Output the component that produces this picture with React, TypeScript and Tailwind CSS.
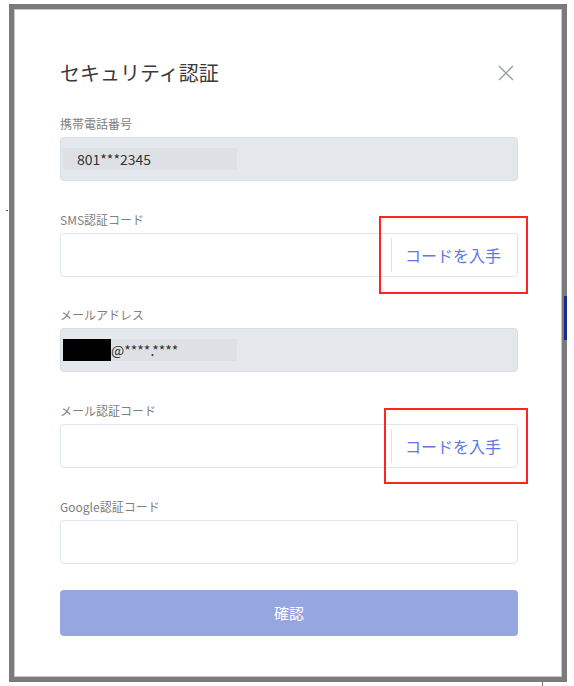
const font = { fontFamily: '"Noto Sans CJK JP", "Noto Sans", sans-serif' };

function Label({ children, className = "" }: { children: React.ReactNode; className?: string }) {
  return <div className={`h-4 text-[12px] leading-4 text-[#808080] ${className}`}>{children}</div>;
}

function CodeInput({ withButton, className = "" }: { withButton?: boolean; className?: string }) {
  return (
    <div className={`flex h-[44px] items-center rounded-[4px] border border-[#dfe5ec] bg-white ${className}`}>
      <div className="flex-1" />
      {withButton && (
        <div className="flex h-[34px] items-center border-l border-[#dde3ea] pl-[13px] pr-[16px]">
          <span className="text-[16px] leading-5 text-[#6276e4]">コードを入手</span>
        </div>
      )}
    </div>
  );
}

function ReadOnly({ children, className = "" }: { children: React.ReactNode; className?: string }) {
  return (
    <div className={`flex h-[44px] items-center rounded-[4px] border border-[#d9dee4] bg-[#e4e8ec] pl-[2px] ${className}`}>
      <div className="flex h-[22px] w-[174px] items-center bg-[#dde1e5]">{children}</div>
    </div>
  );
}

export default function App() {
  return (
    <div className="relative h-[686px] w-[574px] overflow-hidden bg-white pl-[9px] pt-[4px]" style={font}>
      <div className="h-[678px] w-[558px] border-[5px] border-[#7b7b7b]">
        <div className="h-full w-full border border-[#c8c8c8] bg-white pl-[45px] pr-[43px]">
          <div className="mt-[49px] flex h-[28px] items-center justify-between">
            <h1 className="text-[20px] leading-7 text-[#3a3a3a]">セキュリティ認証</h1>
            <svg width="16" height="16" viewBox="0 0 16 16" className="mr-[4px]">
              <path d="M1 1L15 15M15 1L1 15" stroke="#9aa0a8" strokeWidth="1.4" />
            </svg>
          </div>

          <Label className="mt-[29px]">携帯電話番号</Label>
          <ReadOnly className="mt-[5px]">
            <span className="pl-[14px] text-[14px] text-[#333]">801***2345</span>
          </ReadOnly>

          <Label className="mt-[31px]">SMS認証コード</Label>
          <CodeInput withButton className="mt-[5px]" />

          <Label className="mt-[30px]">メールアドレス</Label>
          <ReadOnly className="mt-[5px]">
            <span className="h-[22px] w-[48px] bg-black" />
            <span className="text-[14px] text-[#333]">@****.****</span>
          </ReadOnly>

          <Label className="mt-[31px]">メール認証コード</Label>
          <CodeInput withButton className="mt-[5px]" />

          <Label className="mt-[31px]">Google認証コード</Label>
          <CodeInput className="mt-[5px]" />

          <button className="mt-[26px] flex h-[46px] w-full items-center justify-center rounded-[4px] bg-[#96a6e0] text-[15px] text-white">
            確認
          </button>
        </div>
      </div>

      {/* annotation boxes */}
      <div className="absolute left-[379px] top-[216px] h-[78px] w-[149px] border-2 border-[#ff2424]" />
      <div className="absolute left-[384px] top-[408px] h-[76px] w-[144px] border-2 border-[#ff2424]" />
      {/* screenshot artifacts */}
      <div className="absolute left-[564px] top-[296px] h-[44px] w-[3px] bg-[#1c2a8c]" />
      <div className="absolute left-[542px] top-[682px] h-[4px] w-px bg-[#666]" />
      <div className="absolute left-[6px] top-[210px] h-px w-[2px] bg-[#555]" />
    </div>
  );
}
